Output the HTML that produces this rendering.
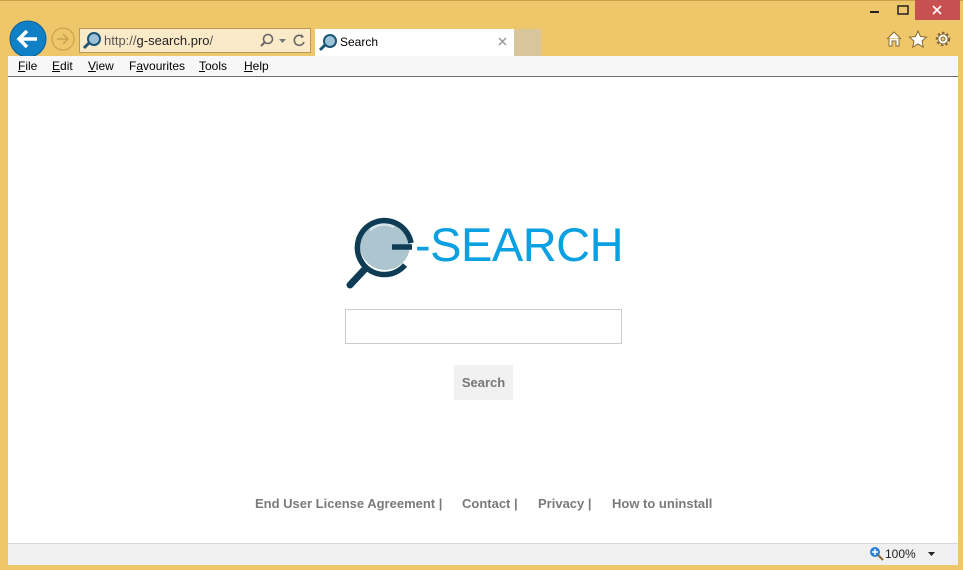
<!DOCTYPE html>
<html><head><meta charset="utf-8"><style>
*{margin:0;padding:0;box-sizing:border-box}
body{width:963px;height:570px;background:#efc76b;position:relative;overflow:hidden;font-family:"Liberation Sans",sans-serif}
.a{position:absolute}
.menu span{position:absolute;top:59px;font-size:12px;color:#000}
.menu u{text-decoration:underline}
.foot{position:absolute;top:496px;font-size:13px;font-weight:bold;color:#7a7a7a;white-space:nowrap}
</style></head><body>
<div class="a" style="left:0;top:0;width:963px;height:1px;background:#c9a24e"></div>
<div class="a" style="left:915px;top:0;width:45px;height:20px;background:#c75050"></div>
<svg class="a" style="left:860px;top:0" width="103" height="20"><rect x="10" y="11" width="9" height="2" fill="#222"/><rect x="38" y="6" width="10" height="8" fill="none" stroke="#222" stroke-width="1.5"/><path d="M73 6l8 8M81 6l-8 8" stroke="#fff" stroke-width="1.6"/></svg>
<svg class="a" style="left:884px;top:29px" width="72" height="20">
<path d="M3 10L10 3L17 10M5 9V17H8V12H12V17H15V9" fill="#fff" stroke="#8a6a30" stroke-width="1"/>
<path d="M34 2l2.5 5.5 6 .6-4.5 4 1.3 6-5.3-3.1-5.3 3.1 1.3-6-4.5-4 6-.6z" fill="#fff" stroke="#8a6a30" stroke-width="1"/>
<circle cx="59" cy="10" r="6" fill="#fff" stroke="#8a6a30" stroke-width="2.5" stroke-dasharray="2.5 2"/><circle cx="59" cy="10" r="5" fill="#fff" stroke="#8a6a30"/><circle cx="59" cy="10" r="2" fill="#efc76b" stroke="#8a6a30"/>
</svg>
<svg class="a" style="left:8px;top:20px" width="72" height="38">
<circle cx="20" cy="19" r="18" fill="#0f7fc6" stroke="#0a5e96"/>
<path d="M29 19H12M19 11l-8 8 8 8" stroke="#fff" stroke-width="3.5" fill="none"/>
<circle cx="55" cy="19" r="11" fill="none" stroke="#c9a250" stroke-width="1.2"/>
<path d="M49 19h10M55 14l5 5-5 5" stroke="#c9a250" stroke-width="1.5" fill="none"/>
</svg>
<div class="a" style="left:79px;top:28px;width:232px;height:25px;background:#fbeac8;border:1px solid #bb9a55"></div>
<svg class="a" style="left:82px;top:31px" width="22" height="19"><circle cx="12" cy="8" r="6" fill="#9cc2d8" stroke="#1c5677" stroke-width="2"/><path d="M7 12l-5 5" stroke="#1c5677" stroke-width="3"/></svg>
<div class="a" style="left:104px;top:33px;font-size:13px;color:#555">http://<span style="color:#222">g-search.pro</span>/</div>
<svg class="a" style="left:258px;top:31px" width="52" height="20"><circle cx="10" cy="8" r="4.5" fill="none" stroke="#666" stroke-width="1.6"/><path d="M7 11l-4 4" stroke="#666" stroke-width="2"/><path d="M21 8h7l-3.5 4z" fill="#777"/><path d="M45 6a5 5 0 1 0 1 5" fill="none" stroke="#666" stroke-width="1.6"/><path d="M43 3l3 3-3 1z" fill="#666"/></svg>
<div class="a" style="left:315px;top:29px;width:199px;height:27px;background:#fff"></div>
<div class="a" style="left:514px;top:29px;width:27px;height:27px;background:#d8c59c"></div>
<svg class="a" style="left:318px;top:33px" width="22" height="19"><circle cx="12" cy="8" r="6" fill="#9cc2d8" stroke="#1c5677" stroke-width="2"/><path d="M7 12l-5 5" stroke="#1c5677" stroke-width="3"/></svg>
<div class="a" style="left:340px;top:35px;font-size:12px;color:#000">Search</div>
<svg class="a" style="left:498px;top:37px" width="10" height="10"><path d="M1 1l7 7M8 1l-7 7" stroke="#999" stroke-width="1.5"/></svg>
<div class="a" style="left:8px;top:56px;width:950px;height:20px;background:#f7f7f7"></div>
<div class="a" style="left:8px;top:76px;width:950px;height:1px;background:#6b6b6b"></div>
<div class="menu">
<span style="left:18px"><u>F</u>ile</span><span style="left:52px"><u>E</u>dit</span><span style="left:88px"><u>V</u>iew</span><span style="left:129px">F<u>a</u>vourites</span><span style="left:199px"><u>T</u>ools</span><span style="left:244px"><u>H</u>elp</span>
</div>
<div class="a" style="left:8px;top:77px;width:950px;height:466px;background:#fff"></div>
<svg class="a" style="left:340px;top:210px" width="100" height="85">
<path d="M24 60L10 75" stroke="#0e3c55" stroke-width="7" stroke-linecap="round"/>
<circle cx="45" cy="35" r="25" fill="#acc5cf"/>
<path d="M30 20a20 20 0 0 1 24 -3" stroke="#d6e4ea" stroke-width="3" fill="none"/>
<path d="M71 33A27 27 0 1 0 65 55M52 37H72" stroke="#0e3c55" stroke-width="5.5" fill="none"/>
</svg>
<div class="a" style="left:415px;top:215px;font-size:47px;color:#0aa0e2;letter-spacing:-0.5px;line-height:60px">-SEARCH</div>
<div class="a" style="left:345px;top:309px;width:277px;height:35px;border:1px solid #ccc;background:#fff"></div>
<div class="a" style="left:454px;top:365px;width:59px;height:35px;background:#f1f1f1;color:#777;font-size:13px;font-weight:bold;text-align:center;line-height:35px">Search</div>
<div class="foot" style="left:255px">End User License Agreement |</div>
<div class="foot" style="left:462px">Contact |</div>
<div class="foot" style="left:538px">Privacy |</div>
<div class="foot" style="left:612px">How to uninstall</div>
<div class="a" style="left:8px;top:543px;width:950px;height:22px;background:#f0f0f0;border-top:1px solid #d8d8d8"></div>
<svg class="a" style="left:869px;top:546px" width="16" height="16"><circle cx="6" cy="6" r="5" fill="#2a7fd4"/><path d="M3 6h6M6 3v6" stroke="#fff" stroke-width="1.6"/><path d="M9 9l5 5" stroke="#8a6a30" stroke-width="2"/></svg>
<div class="a" style="left:885px;top:547px;font-size:12px;color:#222">100%</div>
<svg class="a" style="left:927px;top:551px" width="10" height="6"><path d="M1 1h7l-3.5 4z" fill="#222"/></svg>
</body></html>
